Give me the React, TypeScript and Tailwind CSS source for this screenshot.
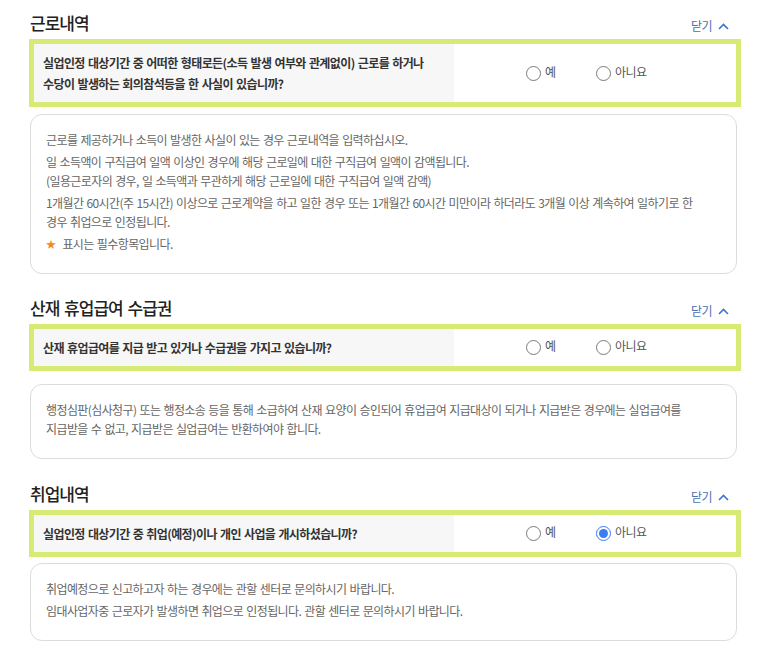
import React from "react";

const font = { fontFamily: '"Noto Sans CJK KR", "Noto Sans", sans-serif' };

function CloseToggle() {
  return (
    <button className="flex items-center gap-[5px] pr-[11px] text-[12px] tracking-[-0.5px] text-[#4a70b0] leading-[18px]">
      닫기
      <svg width="13" height="13" viewBox="0 0 13 13" fill="none">
        <polyline points="2,9 6.5,4.5 11,9" stroke="#3e74d0" strokeWidth="1.6" />
      </svg>
    </button>
  );
}

function Radio({ label, checked }: { label: string; checked?: boolean }) {
  return (
    <label className="flex w-[70px] items-center gap-[4px]">
      {checked ? (
        <span className="flex h-[15px] w-[15px] items-center justify-center rounded-full border border-[#3b7cf5] bg-white">
          <span className="h-[9px] w-[9px] rounded-full bg-[#3b7cf5]" />
        </span>
      ) : (
        <span className="h-[15px] w-[15px] rounded-full border border-[#7a7a7a] bg-white" />
      )}
      <span className="-mt-[3px] text-[12px] tracking-[-0.5px] text-[#555]">{label}</span>
    </label>
  );
}

function Question({ children, yes }: { children: React.ReactNode; yes?: boolean }) {
  return (
    <div className="flex border-[5px] border-[#d5eb73]">
      <div className="w-[420px] bg-[#f7f7f7] py-[8px] pl-[9px] text-[12px] font-semibold leading-[21px] tracking-[-0.6px] [word-spacing:1px] text-[#333]">
        {children}
      </div>
      <div className="flex flex-1 items-center bg-white pl-[72px]">
        <Radio label="예" />
        <Radio label="아니요" checked={yes === false} />
      </div>
    </div>
  );
}

function InfoBox({ children, className }: { children: React.ReactNode; className?: string }) {
  return (
    <div
      className={
        "mr-[4px] ml-[1px] flex flex-col gap-[3px] rounded-[12px] border border-[#dcdcdc] bg-white pt-[15px] pb-[20px] pl-[15px] text-[12px] leading-[19px] tracking-[-0.6px] [word-spacing:1px] text-[#666] " +
        (className ?? "")
      }
    >
      {children}
    </div>
  );
}

function Heading({ title }: { title: string }) {
  return (
    <div className="mb-[4px] flex items-end justify-between pl-[1px]">
      <h2 className="text-[17px] font-medium leading-[24px] tracking-[-1px] [word-spacing:2px] text-[#222]">{title}</h2>
      <CloseToggle />
    </div>
  );
}

export default function App() {
  return (
    <div style={font} className="min-h-[659px] w-[761px] bg-white pt-[11px] pl-[29px] pr-[20px]">
      <section>
        <Heading title="근로내역" />
        <Question>
          실업인정 대상기간 중 어떠한 형태로든(소득 발생 여부와 관계없이) 근로를 하거나
          <br />
          수당이 발생하는 회의참석등을 한 사실이 있습니까?
        </Question>
        <InfoBox className="mt-[7px]">
          <p>근로를 제공하거나 소득이 발생한 사실이 있는 경우 근로내역을 입력하십시오.</p>
          <p>
            일 소득액이 구직급여 일액 이상인 경우에 해당 근로일에 대한 구직급여 일액이 감액됩니다.
            <br />
            (일용근로자의 경우, 일 소득액과 무관하게 해당 근로일에 대한 구직급여 일액 감액)
          </p>
          <p>
            1개월간 60시간(주 15시간) 이상으로 근로계약을 하고 일한 경우 또는 1개월간 60시간 미만이라 하더라도 3개월 이상 계속하여 일하기로 한
            <br />
            경우 취업으로 인정됩니다.
          </p>
          <p className="flex items-center gap-[7px]">
            <span className="text-[10px] text-[#f08a24]">★</span>
            표시는 필수항목입니다.
          </p>
        </InfoBox>
      </section>

      <section className="mt-[22px]">
        <Heading title="산재 휴업급여 수급권" />
        <Question>산재 휴업급여를 지급 받고 있거나 수급권을 가지고 있습니까?</Question>
        <InfoBox className="mt-[13px]">
          <p>
            행정심판(심사청구) 또는 행정소송 등을 통해 소급하여 산재 요양이 승인되어 휴업급여 지급대상이 되거나 지급받은 경우에는 실업급여를
            <br />
            지급받을 수 없고, 지급받은 실업급여는 반환하여야 합니다.
          </p>
        </InfoBox>
      </section>

      <section className="mt-[23px]">
        <Heading title="취업내역" />
        <Question yes={false}>실업인정 대상기간 중 취업(예정)이나 개인 사업을 개시하셨습니까?</Question>
        <InfoBox className="mt-[6px]">
          <p>취업예정으로 신고하고자 하는 경우에는 관할 센터로 문의하시기 바랍니다.</p>
          <p>임대사업자중 근로자가 발생하면 취업으로 인정됩니다. 관할 센터로 문의하시기 바랍니다.</p>
        </InfoBox>
      </section>
    </div>
  );
}
